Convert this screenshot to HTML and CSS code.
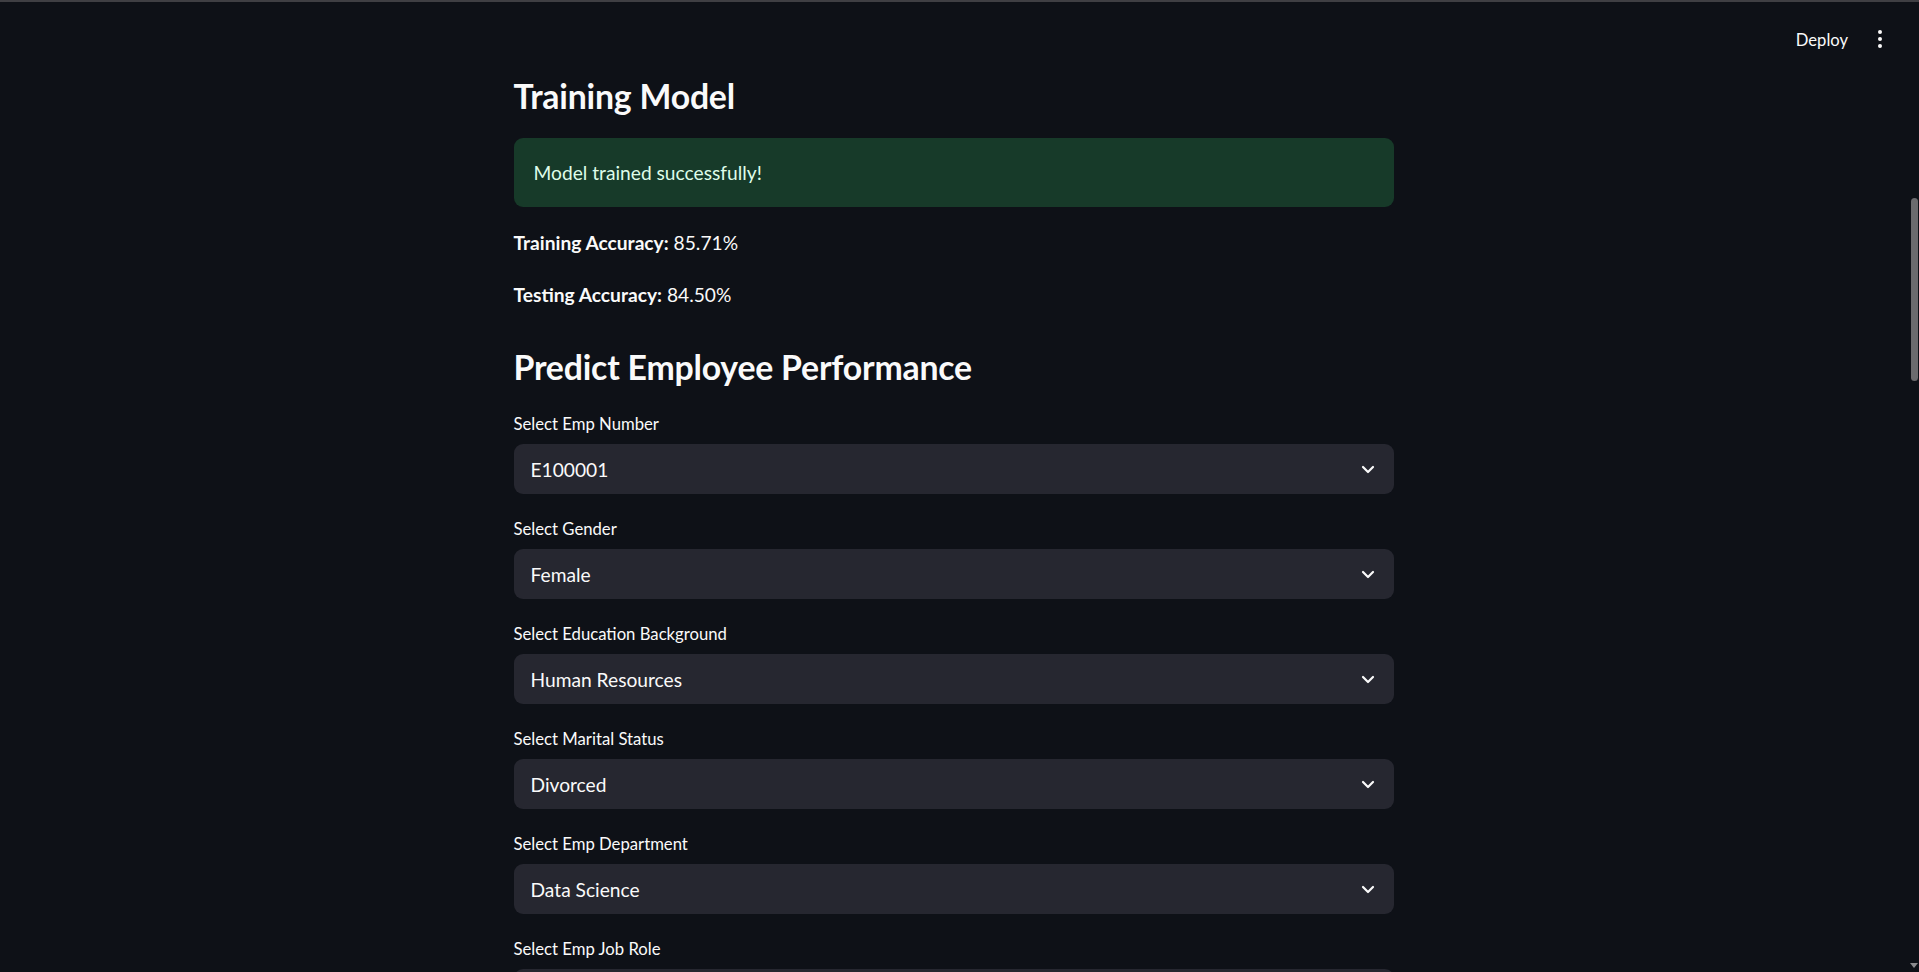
FILE: index.html
```html
<!DOCTYPE html>
<html lang="en">
<head>
<meta charset="utf-8">
<title>Employee Performance</title>
<link rel="stylesheet" href="styles.css">
</head>
<body>
<div class="topline"></div>
<div class="app">
  <div class="view">
    <header class="toolbar">
      <span class="deploy">Deploy</span>
      <span class="kebab"><i></i><i></i><i></i></span>
    </header>
    <main class="content">
      <h3 class="heading">Training Model</h3>
      <div class="alert">Model trained successfully!</div>
      <p class="para"><strong>Training Accuracy:</strong> 85.71%</p>
      <p class="para"><strong>Testing Accuracy:</strong> 84.50%</p>
      <h3 class="heading">Predict Employee Performance</h3>

      <div class="field">
        <label class="label">Select Emp Number</label>
        <div class="select"><span>E100001</span><svg class="chev" width="14" height="9" viewBox="0 0 14 9"><polyline points="2,2 7,7 12,2" fill="none" stroke="#fafafa" stroke-width="2.2" stroke-linecap="round" stroke-linejoin="round"/></svg></div>
      </div>
      <div class="field">
        <label class="label">Select Gender</label>
        <div class="select"><span>Female</span><svg class="chev" width="14" height="9" viewBox="0 0 14 9"><polyline points="2,2 7,7 12,2" fill="none" stroke="#fafafa" stroke-width="2.2" stroke-linecap="round" stroke-linejoin="round"/></svg></div>
      </div>
      <div class="field">
        <label class="label">Select Education Background</label>
        <div class="select"><span>Human Resources</span><svg class="chev" width="14" height="9" viewBox="0 0 14 9"><polyline points="2,2 7,7 12,2" fill="none" stroke="#fafafa" stroke-width="2.2" stroke-linecap="round" stroke-linejoin="round"/></svg></div>
      </div>
      <div class="field">
        <label class="label">Select Marital Status</label>
        <div class="select"><span>Divorced</span><svg class="chev" width="14" height="9" viewBox="0 0 14 9"><polyline points="2,2 7,7 12,2" fill="none" stroke="#fafafa" stroke-width="2.2" stroke-linecap="round" stroke-linejoin="round"/></svg></div>
      </div>
      <div class="field">
        <label class="label">Select Emp Department</label>
        <div class="select"><span>Data Science</span><svg class="chev" width="14" height="9" viewBox="0 0 14 9"><polyline points="2,2 7,7 12,2" fill="none" stroke="#fafafa" stroke-width="2.2" stroke-linecap="round" stroke-linejoin="round"/></svg></div>
      </div>
      <div class="field">
        <label class="label">Select Emp Job Role</label>
        <div class="select"><span>Data Scientist</span><svg class="chev" width="14" height="9" viewBox="0 0 14 9"><polyline points="2,2 7,7 12,2" fill="none" stroke="#fafafa" stroke-width="2.2" stroke-linecap="round" stroke-linejoin="round"/></svg></div>
      </div>
    </main>
  </div>
  <div class="scrolltrack">
    <div class="thumb"></div>
    <div class="arrow"></div>
  </div>
</div>
</body>
</html>
```
FILE: styles.css
```css
html, body {
  margin: 0;
  padding: 0;
  height: 972px;
  overflow: hidden;
  background: #0e1117;
  color: #fafafa;
  font-family: Lato, "Noto Sans", sans-serif;
}

.topline {
  height: 2px;
  background: #3f3f43;
}

.app {
  display: flex;
  height: 970px;
}

.view {
  flex: 1;
  position: relative;
  overflow: hidden;
}

.toolbar {
  position: absolute;
  top: 0;
  right: 0;
  height: 78px;
  display: flex;
  align-items: center;
  gap: 30px;
  padding-right: 25px;
}

.deploy {
  font-size: 16.6px;
  color: #fafafa;
  margin-top: -2px;
}

.kebab {
  display: flex;
  flex-direction: column;
  gap: 3px;
  margin-top: -4px;
}

.kebab i {
  display: block;
  width: 4px;
  height: 4px;
  border-radius: 50%;
  background: #fafafa;
}

.content {
  width: 880px;
  margin: 0 auto;
  padding-top: 58px;
  display: flex;
  flex-direction: column;
  gap: 20px;
}

.heading {
  margin: 0;
  font-size: 33.8px;
  font-weight: 700;
  line-height: 42px;
  padding: 15px 0 1px;
  letter-spacing: -0.2px;
}

.alert {
  height: 69px;
  box-sizing: border-box;
  padding: 0 20px;
  display: flex;
  align-items: center;
  border-radius: 9px;
  background: #173a29;
  color: #dffde9;
  font-size: 19.2px;
}

.para {
  margin: 0;
  font-size: 19.2px;
  line-height: 32px;
}

.para strong {
  font-weight: 700;
}

.field {
  display: flex;
  flex-direction: column;
}

.label {
  height: 30px;
  display: flex;
  align-items: center;
  font-size: 16.7px;
  margin-bottom: 5px;
}

.select {
  height: 50px;
  box-sizing: border-box;
  border-radius: 9px;
  background: #262730;
  padding: 0 19px 0 17px;
  display: flex;
  align-items: center;
  justify-content: space-between;
  font-size: 19.2px;
}

.scrolltrack {
  width: 12px;
  display: flex;
  flex-direction: column;
  align-items: center;
  padding-left: 2px;
  box-sizing: border-box;
}

.thumb {
  width: 7px;
  height: 183px;
  margin-top: 196px;
  border-radius: 4px;
  background: #6b6b6e;
}

.arrow {
  margin-top: auto;
  margin-bottom: 4px;
  width: 0;
  height: 0;
  border-left: 4px solid transparent;
  border-right: 4px solid transparent;
  border-top: 5px solid #8a8a8d;
}
```
